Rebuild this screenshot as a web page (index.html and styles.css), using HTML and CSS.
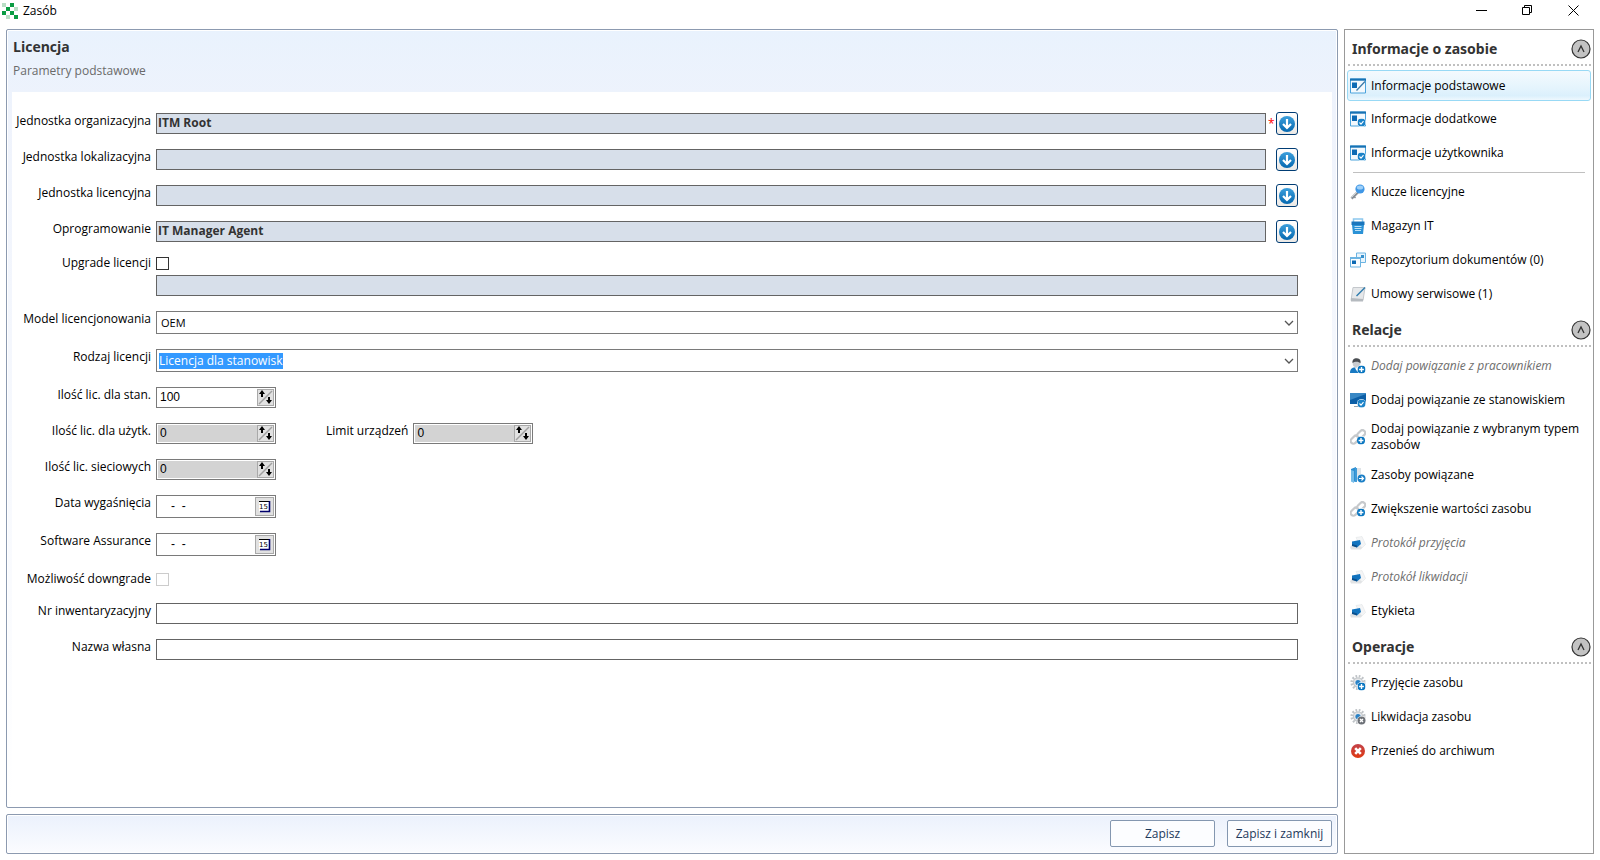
FILE: index.html
```html
<!DOCTYPE html>
<html lang="pl">
<head>
  <meta charset="UTF-8">
  <meta name="viewport" content="width=device-width, initial-scale=1.0">
  <title>Zasób</title>
  <link rel="stylesheet" href="styles.css">
</head>
<body>
  <!-- Shared icons -->
  <svg class="sprite" aria-hidden="true">
    <defs>
      <linearGradient id="blue" x1="0" y1="0" x2="0" y2="1">
        <stop offset="0" stop-color="#3c9fdc"/>
        <stop offset="1" stop-color="#0568b0"/>
      </linearGradient>
      <linearGradient id="red" x1="0" y1="0" x2="0" y2="1">
        <stop offset="0" stop-color="#c2424a"/>
        <stop offset="1" stop-color="#e03a12"/>
      </linearGradient>
      <symbol id="down" viewBox="0 0 16 16">
        <circle cx="8" cy="8" r="8" fill="url(#blue)"/>
        <path d="M8 3v9M4 8l4 4 4-4" fill="none" stroke="#fff" stroke-width="2.2"/>
      </symbol>
      <symbol id="updown" viewBox="0 0 15 15">
        <path d="M1 14L14 1" stroke="#a0a0a0" stroke-width="1.4"/>
        <path d="M4 0l3 4H5v3H3V4H1zM11 14l3-4h-2V7h-2v3H8z" fill="#000"/>
      </symbol>
      <symbol id="calendar" viewBox="0 0 13 13">
        <path d="M1 1h11v10H1z" fill="#fff"/>
        <path d="M1 1.500h10" stroke="#000" fill="none"/>
        <path d="M2 11.500h9.500V1" stroke="#00006c" stroke-width="1.600" fill="none"/>
        <text x="1" y="9" font-family="DejaVu Sans" font-size="7">15</text>
      </symbol>
      <symbol id="plus" viewBox="0 0 8 8">
        <circle cx="4" cy="4" r="4" fill="#0a76c0"/>
        <path d="M4 1.600v4.800M1.600 4h4.800" stroke="#fff" stroke-width="1.400"/>
      </symbol>
      <symbol id="check" viewBox="0 0 8 8">
        <circle cx="4" cy="4" r="4" fill="#1c83c8"/>
        <path d="M2 4l1.500 1.600L6 2.600" stroke="#fff" stroke-width="1.100" fill="none"/>
      </symbol>
      <symbol id="form-edit" viewBox="0 0 16 16">
        <path d="M.5 1h15v14H.5z" fill="#f4f9fd" stroke="#4ba3dc"/>
        <path d="M0 .5h16v2.200H0z" fill="#1672b4"/>
        <path d="M2 4.500h5V10H2z" fill="#0d6ab4"/>
        <path d="M6.500 12.500L15 3.500" stroke="#3c7aa8" stroke-width="1.300"/>
      </symbol>
      <symbol id="form-check" viewBox="0 0 16 16">
        <path d="M.5 1h15v14H.5z" fill="#f4f9fd" stroke="#4ba3dc"/>
        <path d="M0 .5h16v2.200H0z" fill="#1672b4"/>
        <path d="M2 4.500h5V10H2z" fill="#0d6ab4"/>
        <circle cx="11.500" cy="11.500" r="4.500" fill="#fff"/>
        <use href="#check" x="7.500" y="7.500" width="8" height="8"/>
      </symbol>
      <symbol id="key" viewBox="0 0 16 16">
        <path d="M1.500 14.500L9 7" stroke="#8a9097" stroke-width="2.600"/>
        <path d="M1.500 13.500L8.500 6.500" stroke="#cfd3d7" stroke-width="1"/>
        <path d="M3.500 12l2 2" stroke="#8a9097" stroke-width="1.500"/>
        <circle cx="10" cy="5" r="4.600" fill="#3f97e6"/>
        <ellipse cx="10" cy="3.600" rx="3.200" ry="2" fill="#9fd0f8"/>
      </symbol>
      <symbol id="basket" viewBox="0 0 16 16">
        <path d="M3.500 4V1h9v3" fill="none" stroke="#8cc8ee" stroke-width="1.500"/>
        <path d="M1.500 3.500h13V7h-13z" fill="#1a76bd"/>
        <path d="M2 7h12l-1 9H3z" fill="#2b92d6"/>
        <path d="M4.500 8.500h7M4.500 10.500h7M5 12.500h6" stroke="#bfe2f7"/>
      </symbol>
      <symbol id="windows" viewBox="0 0 16 16">
        <path d="M6.500 1h9v9.500h-9z" fill="#eaf5fc" stroke="#6cb4e2"/>
        <path d="M11 3h3v3h-3z" fill="#3790cd"/>
        <path d="M.5 6h10v9H.5z" fill="#fafdff" stroke="#6cb4e2"/>
        <path d="M0 5h11v2H0z" fill="#6cb4e2"/>
        <path d="M2 8.500h4V12H2z" fill="#0d6ab4"/>
      </symbol>
      <symbol id="note" viewBox="0 0 16 16">
        <path d="M3 1.500h12l-2 13H1z" fill="#e6e8ea" stroke="#c4c8cc"/>
        <path d="M1 12l12 1v2.500H1z" fill="#b5babf"/>
        <path d="M6.500 10L15 1.500" stroke="#2f7cae" stroke-width="1.500"/>
      </symbol>
      <symbol id="person" viewBox="0 0 16 16">
        <path d="M0 15c0-4 2-5.500 5-5.500s6 1.500 6 5.500z" fill="#1879c2"/>
        <path d="M5 9.500h3L6.500 13z" fill="#fff"/>
        <circle cx="6.500" cy="5.500" r="3.800" fill="#c9ccd0"/>
        <path d="M2.500 5C2 1 5 0 7 .3c3 .2 4 2.200 3.500 5C9 3.500 5 3 2.500 5z" fill="#4a4d52"/>
        <circle cx="11.500" cy="11.500" r="4.500" fill="#fff"/>
        <use href="#plus" x="7.500" y="7.500" width="8" height="8"/>
      </symbol>
      <symbol id="monitor" viewBox="0 0 16 16">
        <path d="M0 1h16v11H0z" fill="#0c5ea6"/>
        <path d="M0 1h16v1L0 8z" fill="#3887c4"/>
        <path d="M4 14h6v1H4z" fill="#9aa4ad"/>
        <circle cx="11.500" cy="11.500" r="4.500" fill="#dcecf8"/>
        <use href="#check" x="7.500" y="7.500" width="8" height="8"/>
      </symbol>
      <symbol id="link-add" viewBox="0 0 16 16">
        <g fill="none" stroke="#c6c9cc" stroke-width="2.200">
          <rect x="6.500" y="2.500" width="9" height="5.500" rx="2.700" transform="rotate(-45 11 5)"/>
          <rect x="0" y="8" width="9" height="5.500" rx="2.700" transform="rotate(-45 4.500 10.500)"/>
        </g>
        <circle cx="11.500" cy="11.500" r="4.500" fill="#fff"/>
        <use href="#plus" x="7" y="7.500" width="8" height="8"/>
      </symbol>
      <symbol id="folder" viewBox="0 0 16 16">
        <path d="M1 2l5-2v15l-5-1z" fill="#2d8fd2"/>
        <path d="M5 1h6v13H5z" fill="#dfe4e8"/>
        <path d="M5 1h2v14H5z" fill="#3f9bd8"/>
        <path d="M1 3l3 1v12l-3-1.500z" fill="#76bce8"/>
        <circle cx="11.500" cy="11.500" r="4.500" fill="#fff"/>
        <circle cx="11.500" cy="11.500" r="4" fill="#1c7fc6"/>
        <path d="M9 11.500h4.500M11.500 9.500l2 2-2 2" stroke="#fff" stroke-width="1.100" fill="none"/>
      </symbol>
      <symbol id="printer" viewBox="0 0 16 16">
        <path d="M6 2.500l6-1 3.500 8-4 4z" fill="#f4f5f6" stroke="#e3e5e7" stroke-width=".6"/>
        <path d="M0 12l3-3 9 3-1 2.500H1z" fill="#e1e3e5"/>
        <path d="M2 6.500l8-1.500 1 4-4 3.500L2 10z" fill="#1274bf"/>
        <path d="M2 9l5 1.500v2L2 11z" fill="#0a4f8c"/>
      </symbol>
      <symbol id="gear" viewBox="0 0 16 16">
        <circle cx="8" cy="7.500" r="6.300" fill="none" stroke="#bfc3c7" stroke-width="2.600" stroke-dasharray="1.700 1.600"/>
        <circle cx="8" cy="7.500" r="4.600" fill="#e3e5e8" stroke="#c3c7ca" stroke-width="1.200"/>
        <circle cx="8" cy="7.500" r="2.600" fill="#2a82c6"/>
        <circle cx="11.500" cy="11.500" r="4.500" fill="#fff"/>
      </symbol>
      <symbol id="gear-add" viewBox="0 0 16 16">
        <use href="#gear"/>
        <use href="#plus" x="7.500" y="7.500" width="8" height="8"/>
      </symbol>
      <symbol id="gear-remove" viewBox="0 0 16 16">
        <use href="#gear"/>
        <circle cx="11.500" cy="11.500" r="4" fill="#6d7177"/>
        <path d="M10 10l3 3M13 10l-3 3" stroke="#fff" stroke-width="1.400"/>
      </symbol>
      <symbol id="archive" viewBox="0 0 16 16">
        <circle cx="8" cy="8" r="7" fill="url(#red)"/>
        <path d="M5.200 5.200l5.600 5.600M10.800 5.200l-5.600 5.600" stroke="#fff" stroke-width="2.600"/>
      </symbol>
      <symbol id="collapse" viewBox="0 0 20 20">
        <circle cx="10" cy="10" r="9" fill="#c3c3c3" stroke="#333" stroke-width="1.200"/>
        <path d="M7 13l3-6 3 6" fill="none" stroke="#333" stroke-width="1.300"/>
      </symbol>
      <symbol id="chevron" viewBox="0 0 10 6">
        <path d="M1 1l4 4 4-4" fill="none" stroke="#555" stroke-width="1.300"/>
      </symbol>
    </defs>
  </svg>

  <header class="titlebar">
    <svg class="logo" viewBox="0 0 16 16" shape-rendering="crispEdges">
      <path d="M0 0h4v4H0zM12 4h4v4h-4zM4 12h4v4H4z" fill="#b9dec5"/>
      <path d="M8 0h4v4H8zM4 4h4v4H4zM0 8h4v4H0zM8 8h4v4H8zM12 12h4v4h-4z" fill="#0a9c43"/>
    </svg>
    <h1>Zasób</h1>
    <div class="window-buttons">
      <button type="button" aria-label="Minimalizuj"><svg viewBox="0 0 11 11"><path d="M0 5.500h11"/></svg></button>
      <button type="button" aria-label="Przywróć"><svg viewBox="0 0 11 11"><path d="M.5 2.500h7v7h-7zM2.500 2.500v-2h7v7h-2"/></svg></button>
      <button type="button" aria-label="Zamknij"><svg viewBox="0 0 11 11"><path d="M.5.500l10 10M10.500.500l-10 10"/></svg></button>
    </div>
  </header>

  <div class="window">
    <form class="editor" id="license-form">
      <section class="panel">
        <h2>Licencja</h2>
        <p class="subtitle">Parametry podstawowe</p>

        <div class="fields">
          <div class="row">
            <label for="org">Jednostka organizacyjna</label>
            <input class="text locked" id="org" type="text" value="ITM Root" readonly>
            <span class="required">*</span>
            <button class="pick" type="button" aria-label="Wybierz"><svg><use href="#down"/></svg></button>
          </div>
          <div class="row">
            <label for="loc">Jednostka lokalizacyjna</label>
            <input class="text locked" id="loc" type="text" readonly>
            <span class="required"></span>
            <button class="pick" type="button" aria-label="Wybierz"><svg><use href="#down"/></svg></button>
          </div>
          <div class="row">
            <label for="lic">Jednostka licencyjna</label>
            <input class="text locked" id="lic" type="text" readonly>
            <span class="required"></span>
            <button class="pick" type="button" aria-label="Wybierz"><svg><use href="#down"/></svg></button>
          </div>
          <div class="row">
            <label for="software">Oprogramowanie</label>
            <input class="text locked" id="software" type="text" value="IT Manager Agent" readonly>
            <span class="required"></span>
            <button class="pick" type="button" aria-label="Wybierz"><svg><use href="#down"/></svg></button>
          </div>

          <div class="row upgrade">
            <label for="upgrade">Upgrade licencji</label>
            <input class="tick" id="upgrade" type="checkbox">
          </div>
          <div class="row">
            <span class="label"></span>
            <input class="text locked" type="text" aria-label="Upgrade licencji" readonly>
          </div>

          <div class="row">
            <label for="model">Model licencjonowania</label>
            <div class="combo">
              <select class="small-font" id="model"><option>OEM</option></select>
              <svg><use href="#chevron"/></svg>
            </div>
          </div>
          <div class="row">
            <label for="kind">Rodzaj licencji</label>
            <div class="combo">
              <select class="selected" id="kind"><option>Licencja dla stanowisk</option></select>
              <svg><use href="#chevron"/></svg>
            </div>
          </div>

          <div class="row">
            <label for="stations">Ilość lic. dla stan.</label>
            <div class="spin">
              <input id="stations" type="text" value="100">
              <button type="button" aria-label="Zmień"><svg><use href="#updown"/></svg></button>
            </div>
          </div>
          <div class="row">
            <label for="users">Ilość lic. dla użytk.</label>
            <div class="spin">
              <input id="users" type="text" value="0" disabled>
              <button type="button" aria-label="Zmień" disabled><svg><use href="#updown"/></svg></button>
            </div>
            <label class="limit" for="limit">Limit urządzeń</label>
            <div class="spin">
              <input id="limit" type="text" value="0" disabled>
              <button type="button" aria-label="Zmień" disabled><svg><use href="#updown"/></svg></button>
            </div>
          </div>
          <div class="row">
            <label for="network">Ilość lic. sieciowych</label>
            <div class="spin">
              <input id="network" type="text" value="0" disabled>
              <button type="button" aria-label="Zmień" disabled><svg><use href="#updown"/></svg></button>
            </div>
          </div>

          <div class="row">
            <label for="expires">Data wygaśnięcia</label>
            <div class="spin date">
              <input id="expires" type="text" value="-  -">
              <button type="button" aria-label="Kalendarz"><svg><use href="#calendar"/></svg></button>
            </div>
          </div>
          <div class="row">
            <label for="assurance">Software Assurance</label>
            <div class="spin date">
              <input id="assurance" type="text" value="-  -">
              <button type="button" aria-label="Kalendarz"><svg><use href="#calendar"/></svg></button>
            </div>
          </div>

          <div class="row downgrade">
            <label for="downgrade">Możliwość downgrade</label>
            <input class="tick" id="downgrade" type="checkbox" disabled>
          </div>
          <div class="row">
            <label for="inventory">Nr inwentaryzacyjny</label>
            <input class="text" id="inventory" type="text">
          </div>
          <div class="row">
            <label for="name">Nazwa własna</label>
            <input class="text" id="name" type="text">
          </div>
        </div>
      </section>

      <footer class="actions">
        <button type="submit">Zapisz</button>
        <button type="submit">Zapisz i zamknij</button>
      </footer>
    </form>

    <aside class="sidebar">
      <div class="group-title">
        <h3>Informacje o zasobie</h3>
        <button type="button" aria-label="Zwiń"><svg><use href="#collapse"/></svg></button>
      </div>
      <nav>
        <button type="button" class="item active"><svg><use href="#form-edit"/></svg>Informacje podstawowe</button>
        <button type="button" class="item"><svg><use href="#form-check"/></svg>Informacje dodatkowe</button>
        <button type="button" class="item"><svg><use href="#form-check"/></svg>Informacje użytkownika</button>
        <hr>
        <button type="button" class="item"><svg><use href="#key"/></svg>Klucze licencyjne</button>
        <button type="button" class="item"><svg><use href="#basket"/></svg>Magazyn IT</button>
        <button type="button" class="item"><svg><use href="#windows"/></svg>Repozytorium dokumentów (0)</button>
        <button type="button" class="item"><svg><use href="#note"/></svg>Umowy serwisowe (1)</button>
      </nav>

      <div class="group-title">
        <h3>Relacje</h3>
        <button type="button" aria-label="Zwiń"><svg><use href="#collapse"/></svg></button>
      </div>
      <nav>
        <button type="button" class="item" disabled><svg><use href="#person"/></svg>Dodaj powiązanie z pracownikiem</button>
        <button type="button" class="item"><svg><use href="#monitor"/></svg>Dodaj powiązanie ze stanowiskiem</button>
        <button type="button" class="item"><svg><use href="#link-add"/></svg>Dodaj powiązanie z wybranym typem zasobów</button>
        <button type="button" class="item"><svg><use href="#folder"/></svg>Zasoby powiązane</button>
        <button type="button" class="item"><svg><use href="#link-add"/></svg>Zwiększenie wartości zasobu</button>
        <button type="button" class="item" disabled><svg><use href="#printer"/></svg>Protokół przyjęcia</button>
        <button type="button" class="item" disabled><svg><use href="#printer"/></svg>Protokół likwidacji</button>
        <button type="button" class="item"><svg><use href="#printer"/></svg>Etykieta</button>
      </nav>

      <div class="group-title">
        <h3>Operacje</h3>
        <button type="button" aria-label="Zwiń"><svg><use href="#collapse"/></svg></button>
      </div>
      <nav>
        <button type="button" class="item"><svg><use href="#gear-add"/></svg>Przyjęcie zasobu</button>
        <button type="button" class="item"><svg><use href="#gear-remove"/></svg>Likwidacja zasobu</button>
        <button type="button" class="item"><svg><use href="#archive"/></svg>Przenieś do archiwum</button>
      </nav>
    </aside>
  </div>
</body>
</html>
```
FILE: styles.css
```css
/* Basic reset */
* {
  margin: 0;
  padding: 0;
  box-sizing: border-box;
}

body {
  display: flex;
  flex-direction: column;
  min-height: 100vh;
  padding: 0 6px 6px;
  background-color: white;
  color: #000;
  font-family: "Open Sans", "Noto Sans", sans-serif;
  font-size: 12px;
  line-height: 16px;
}

button,
input,
select {
  font: inherit;
  color: inherit;
  border: none;
  border-radius: 0;
  background: none;
}

.sprite {
  position: absolute;
  width: 0;
  height: 0;
}

/* Title bar */
.titlebar {
  display: flex;
  align-items: center;
  height: 29px;
  margin: 0 -2px 0 -4px;
  padding-bottom: 8px;
}

.logo {
  width: 16px;
  height: 16px;
}

.titlebar h1 {
  margin-left: 5px;
  font-size: 12px;
  font-weight: normal;
}

.window-buttons {
  display: flex;
  margin-left: auto;
}

.window-buttons button {
  width: 46px;
  height: 20px;
}

.window-buttons svg {
  display: block;
  width: 11px;
  height: 11px;
  margin: 0 auto;
  fill: none;
  stroke: #000;
}

.window {
  flex: 1;
  display: flex;
  gap: 6px;
}

.editor {
  flex: 1;
  display: flex;
  flex-direction: column;
  gap: 6px;
}

/* Form panel */
.panel {
  flex: 1;
  display: flex;
  flex-direction: column;
  padding: 8px 5px 5px;
  border: 1px solid #8c9ab0;
  border-radius: 2px;
  background: linear-gradient(#e9f2fd, #eff3fc 90px, #fff);
  box-shadow: inset 0 0 0 1px #fff;
}

.panel h2 {
  padding-left: 1px;
  font-size: 14px;
  line-height: 18px;
  color: #333;
}

.subtitle {
  padding: 7px 0 13px 1px;
  color: #6a6a6a;
}

.fields {
  flex: 1;
  padding: 21px 34px 16px 0;
  background-color: white;
}

.row {
  display: flex;
  align-items: flex-start;
  margin-bottom: 15px;
}

.row > label:first-child,
.label {
  width: 144px;
  padding-right: 5px;
  text-align: right;
  white-space: nowrap;
}

.text {
  flex: 1;
  height: 21px;
  padding: 0 1px 2px;
  border: 1px solid #646464;
}

.locked {
  background-color: #d7dfea;
  color: #333;
  font-weight: bold;
}

.required {
  width: 10px;
  padding: 3px 0 0 2px;
  color: #f00;
}

.pick {
  width: 22px;
  height: 23px;
  margin: -1px 0;
  border: 1px solid #003c74;
  border-radius: 3px;
  background: linear-gradient(#fff, #ebe9e6);
}

.pick svg {
  display: block;
  width: 16px;
  height: 16px;
  margin: 0 auto;
}

.upgrade {
  margin: -2px 0 4px;
}

.downgrade {
  margin-bottom: 16px;
}

.tick {
  appearance: none;
  width: 13px;
  height: 13px;
  margin-top: 2px;
  border: 1px solid #333;
  background-color: white;
}

.tick:disabled {
  border-color: #ccc;
}

.combo {
  flex: 1;
  display: flex;
  align-items: center;
  height: 23px;
  padding: 0 3px 0 2px;
  border: 1px solid #7a7a7a;
}

.combo select {
  appearance: none;
}

.combo svg {
  width: 10px;
  height: 6px;
  margin-left: auto;
}

.combo .small-font {
  padding-left: 2px;
  font-size: 11px;
}

.selected {
  background-color: #3399ff;
  color: white;
}

.spin {
  display: flex;
  width: 120px;
  height: 21px;
  padding: 1px;
  border: 1px solid #7a7a7a;
}

.spin input {
  flex: 1;
  min-width: 0;
  padding: 0 0 1px 2px;
  font-family: "Liberation Sans", Arial, sans-serif;
}

.spin input:disabled {
  background-color: #d3d3d3;
}

.spin button {
  width: 17px;
  border: 1px solid #a9a9a9;
  background-color: #e1e1e1;
}

.spin svg {
  display: block;
  width: 15px;
  height: 15px;
  color: #000;
}

.date {
  height: 23px;
}

.date input {
  padding-left: 13px;
  white-space: pre;
}

.date button {
  width: 19px;
}

.date svg {
  width: 13px;
  height: 13px;
  margin: 0 auto;
}

.limit {
  margin-left: 50px;
  padding-right: 5px;
}

/* Save buttons */
.actions {
  display: flex;
  justify-content: flex-end;
  gap: 12px;
  padding: 5px;
  border: 1px solid #8c9ab0;
  border-radius: 2px;
  background: linear-gradient(#ebf1fc, #fbfcff);
  box-shadow: inset 0 0 0 1px #fff;
}

.actions button {
  width: 105px;
  height: 27px;
  margin-bottom: 1px;
  border: 1px solid #8497b0;
  border-radius: 2px;
  background-color: #fcfdff;
  color: #1e395b;
}

/* Sidebar */
.sidebar {
  width: 250px;
  padding: 0 2px;
  border: 1px solid #999;
}

.group-title {
  display: flex;
  align-items: center;
  justify-content: space-between;
  height: 36px;
  margin-left: 1px;
  padding: 4px 0 0 4px;
  border-bottom: 2px dotted #c0c0c0;
}

.group-title h3 {
  font-family: "Noto Sans", "Open Sans", sans-serif;
  font-size: 14px;
  color: #333;
}

.group-title button,
.group-title svg {
  display: block;
  width: 20px;
  height: 20px;
}

nav {
  padding-top: 2px;
}

.item {
  display: flex;
  align-items: center;
  width: 100%;
  min-height: 34px;
  padding: 4px 3px 5px;
  gap: 5px;
  text-align: left;
}

.item svg {
  flex: none;
  width: 16px;
  height: 16px;
}

.item:disabled {
  color: #6d6d6d;
  font-style: italic;
}

.active {
  min-height: 31px;
  margin: 2px 0 1px;
  padding: 2px;
  border: 1px solid #98d9f5;
  border-radius: 3px;
  background: linear-gradient(#f4fafe, #e4f4fd 60%, #dbf0fc 85%, #eef8fe);
}

hr {
  margin: 2px 6px;
  border: none;
  border-top: 1px solid #c0c0c0;
}
```
